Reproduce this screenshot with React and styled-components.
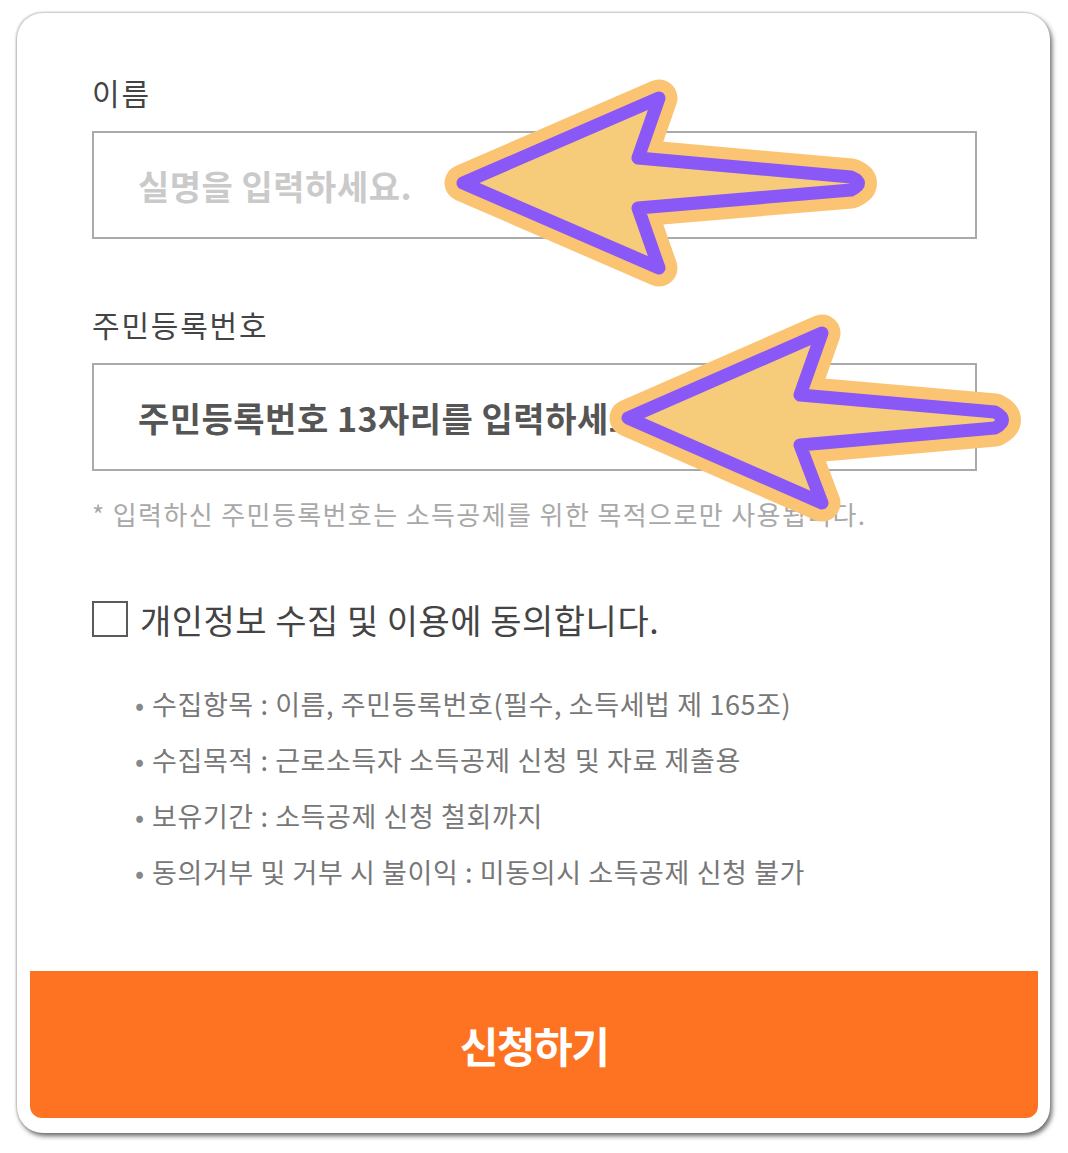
import React from "react";
import styled, { createGlobalStyle } from "styled-components";

const GlobalStyle = createGlobalStyle`
  html, body {
    margin: 0;
    padding: 0;
    background: #ffffff;
  }
  body {
    font-family: "Noto Sans CJK KR", "Noto Sans", sans-serif;
  }
`;

export const Page = styled.div`
  position: relative;
  height: 1153px;
  box-sizing: border-box;
  padding: 13px 18px 20px 17px;
`;

export const Card = styled.div`
  display: flex;
  flex-direction: column;
  height: 1120px;
  box-sizing: border-box;
  background: #ffffff;
  border-radius: 26px;
  box-shadow: -1px -1px 2px rgba(0, 0, 0, 0.2), 2px 3px 5px rgba(0, 0, 0, 0.6);
  overflow: hidden;
`;

export const Content = styled.div`
  display: flex;
  flex-direction: column;
  padding: 59px 73px 0 75px;
`;

export const Label = styled.label`
  font-size: 30px;
  line-height: 40px;
  letter-spacing: 1.8px;
  color: #444444;
  margin-top: ${(props) => props.gap || 0}px;
`;

export const TextInput = styled.input`
  margin-top: 19px;
  height: 108px;
  box-sizing: border-box;
  border: 2px solid #aaaaaa;
  border-radius: 0;
  padding: 0 0 0 44px;
  font-family: "Noto Sans CJK KR", "Noto Sans", sans-serif;
  font-size: 34px;
  font-weight: 700;
  letter-spacing: 0.5px;
  color: #555555;
  background: #ffffff;
  outline: none;

  &::placeholder {
    color: #cacaca;
  }
`;

export const Note = styled.p`
  margin: 26px 0 0;
  font-size: 26px;
  line-height: 34px;
  letter-spacing: 1.4px;
  color: #a8a8a8;
`;

export const AgreeRow = styled.label`
  display: flex;
  align-items: center;
  gap: 12px;
  margin-top: 70px;
  height: 36px;
  font-size: 34px;
  letter-spacing: 0.5px;
  color: #444444;
`;

export const CheckBox = styled.span`
  width: 36px;
  height: 36px;
  box-sizing: border-box;
  border: 2.5px solid #5a5a5a;
  flex-shrink: 0;
`;

export const InfoList = styled.ul`
  list-style: none;
  margin: 39px 0 0;
  padding: 0 0 0 43px;
`;

export const InfoItem = styled.li`
  font-size: 27px;
  line-height: 56px;
  letter-spacing: 0.6px;
  color: #777777;
  white-space: nowrap;

  &::before {
    content: "•";
    display: inline-block;
    width: 17px;
    color: #888888;
  }
`;

export const SubmitButton = styled.button`
  margin: auto 12px 15px 13px;
  height: 147px;
  border: none;
  border-radius: 0 0 12px 12px;
  background: #fd7322;
  color: #ffffff;
  font-family: "Noto Sans CJK KR", "Noto Sans", sans-serif;
  font-size: 42px;
  font-weight: 700;
  letter-spacing: -1.5px;
  cursor: pointer;
`;

export const Overlay = styled.svg`
  position: absolute;
  top: 0;
  left: 0;
  pointer-events: none;
`;

const arrows = [
  "M463 183 L659 98 L638 158 L851 177 Q866 183 851 190 L638 208 L659 268 Z",
  "M628 418 L822 333 L800 395 L995 412 Q1010 420 995 428 L800 445 L822 503 Z",
];

const infoLines = [
  "수집항목 : 이름, 주민등록번호(필수, 소득세법 제 165조)",
  "수집목적 : 근로소득자 소득공제 신청 및 자료 제출용",
  "보유기간 : 소득공제 신청 철회까지",
  "동의거부 및 거부 시 불이익 : 미동의시 소득공제 신청 불가",
];

export default function App() {
  return (
    <>
      <GlobalStyle />
      <Page>
        <Card>
          <Content>
            <Label>이름</Label>
            <TextInput type="text" placeholder="실명을 입력하세요." />
            <Label gap={65}>주민등록번호</Label>
            <TextInput
              type="text"
              defaultValue="주민등록번호 13자리를 입력하세요."
            />
            <Note>* 입력하신 주민등록번호는 소득공제를 위한 목적으로만 사용됩니다.</Note>
            <AgreeRow>
              <CheckBox />
              개인정보 수집 및 이용에 동의합니다.
            </AgreeRow>
            <InfoList>
              {infoLines.map((line) => (
                <InfoItem key={line}>{line}</InfoItem>
              ))}
            </InfoList>
          </Content>
          <SubmitButton>신청하기</SubmitButton>
        </Card>

        <Overlay width="1068" height="1153" viewBox="0 0 1068 1153">
          {arrows.map((d) => (
            <g key={d}>
              <path
                d={d}
                fill="#fbc473"
                stroke="#fbc473"
                strokeWidth="37"
                strokeLinejoin="round"
              />
              <path
                d={d}
                fill="#f6cb79"
                stroke="#8a58f6"
                strokeWidth="13"
                strokeLinejoin="round"
              />
            </g>
          ))}
        </Overlay>
      </Page>
    </>
  );
}
